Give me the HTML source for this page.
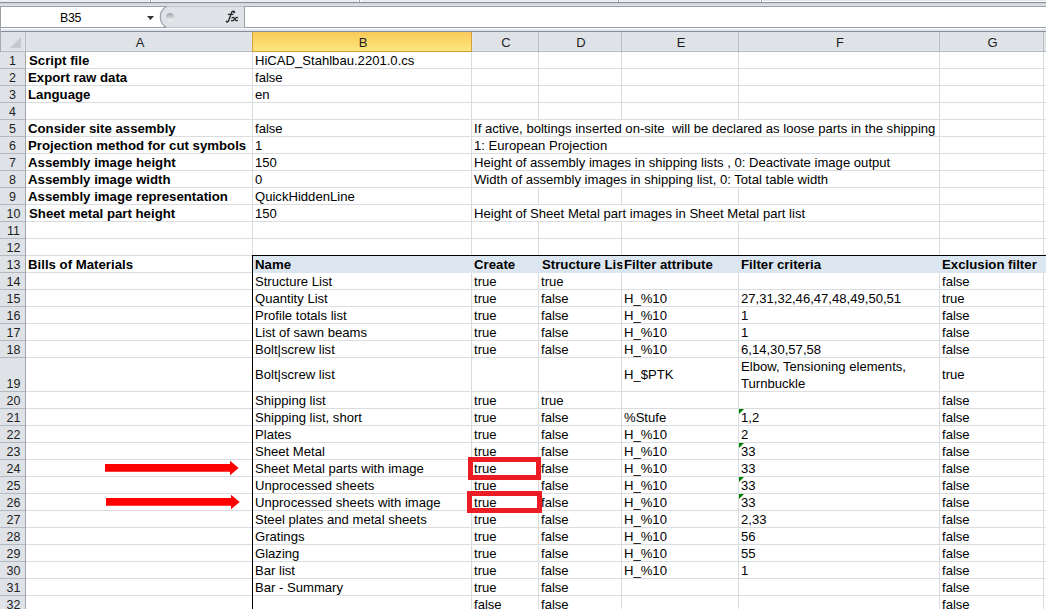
<!DOCTYPE html>
<html><head><meta charset="utf-8"><style>
html,body{margin:0;padding:0;}
body{width:1046px;height:609px;position:relative;overflow:hidden;background:#fff;}
body div, body span, body svg{position:absolute;}
span{white-space:pre;font-family:"Liberation Sans",sans-serif;color:#000;}
.t{font-size:13px;line-height:17px;transform:scaleX(1.007);transform-origin:0 0;}
.b{font-size:13px;line-height:17px;font-weight:bold;transform:scaleX(1.017);transform-origin:0 0;}
.h{font-size:12.5px;line-height:17px;color:#1e1e1e;}
</style></head><body>
<div style="left:0px;top:0px;width:1046px;height:2px;background:#eaedf1;"></div>
<div style="left:149px;top:0px;width:1px;height:2px;background:#ffffff;"></div>
<div style="left:150px;top:0px;width:1px;height:2px;background:#a3a8b0;"></div>
<div style="left:151px;top:0px;width:1px;height:2px;background:#ffffff;"></div>
<div style="left:358px;top:0px;width:1px;height:2px;background:#ffffff;"></div>
<div style="left:359px;top:0px;width:1px;height:2px;background:#a3a8b0;"></div>
<div style="left:360px;top:0px;width:1px;height:2px;background:#ffffff;"></div>
<div style="left:617px;top:0px;width:1px;height:2px;background:#ffffff;"></div>
<div style="left:618px;top:0px;width:1px;height:2px;background:#a3a8b0;"></div>
<div style="left:619px;top:0px;width:1px;height:2px;background:#ffffff;"></div>
<div style="left:760px;top:0px;width:1px;height:2px;background:#ffffff;"></div>
<div style="left:761px;top:0px;width:1px;height:2px;background:#a3a8b0;"></div>
<div style="left:762px;top:0px;width:1px;height:2px;background:#ffffff;"></div>
<div style="left:762px;top:0px;width:284px;height:2px;background:#ffffff;"></div>
<div style="left:763px;top:0px;width:283px;height:1px;background:#e0e4ee;"></div>
<div style="left:0px;top:2px;width:1046px;height:1px;background:#8b9099;"></div>
<div style="left:0;top:3px;width:1046px;height:3px;background:linear-gradient(#ced2d7,#e2e5e9)"></div>
<div style="left:0px;top:6px;width:1046px;height:1px;background:#9aa0a8;"></div>
<div style="left:0px;top:7px;width:1046px;height:20px;background:#ffffff;"></div>
<div style="left:0px;top:6px;width:1px;height:22px;background:#9aa0a8;"></div>
<div style="left:0px;top:27px;width:1046px;height:1px;background:#9aa0a8;"></div>
<div style="left:0px;top:28px;width:1046px;height:1px;background:#ffffff;"></div>
<div style="left:2px;top:29px;width:1044px;height:2px;background:#e1e5f0;"></div>
<div style="left:0px;top:28px;width:1px;height:3px;background:#9aa6bc;"></div>
<div style="left:0px;top:31px;width:1046px;height:1px;background:#8a8d93;"></div>
<span class="h" style="left:60px;top:11px;font-size:12.4px;line-height:15px;color:#000;letter-spacing:-0.3px">B35</span>
<svg style="left:146px;top:15px" width="9" height="6"><path d="M1 1 H8 L4.5 5 Z" fill="#333"/></svg>
<svg style="left:0;top:0" width="260" height="32"><defs><linearGradient id="g1" x1="0" y1="0" x2="0" y2="1"><stop offset="0" stop-color="#9ca0a5"/><stop offset="0.55" stop-color="#cacdd1"/><stop offset="1" stop-color="#f4f5f6"/></linearGradient></defs><path d="M244.5 6.5 H166.5 A12 12 0 0 0 166.5 27.5 H244.5 Z" fill="#dfe3e8"/><path d="M166.5 6.5 A12 12 0 0 0 166.5 27.5" fill="none" stroke="#9aa0a8" stroke-width="1.2"/><rect x="244" y="6" width="1" height="22" fill="#9aa0a8"/><circle cx="170" cy="16.8" r="3.9" fill="url(#g1)"/><g stroke="#2e2e2e" fill="none" stroke-linecap="round"><path d="M234.5 11.9 C233.8 10.9 232.2 11.0 231.6 12.6 L228.7 20.6 C228.2 21.9 227.3 22.3 226.4 21.7" stroke-width="1.45"/><path d="M228.4 14.4 H232.8" stroke-width="1.4"/><path d="M232.0 17.9 C233.1 17.0 233.9 17.5 234.5 18.5 L235.3 19.8 C235.8 20.6 236.6 20.9 237.4 20.4" stroke-width="1.3"/><path d="M237.6 17.5 C236.8 17.1 236.1 17.6 235.3 18.5 L233.5 20.3 C232.9 20.9 232.1 21.0 231.5 20.6" stroke-width="1.3"/></g><circle cx="234.1" cy="12.3" r="1.05" fill="#2e2e2e"/><circle cx="226.8" cy="21.3" r="0.9" fill="#2e2e2e"/></svg>
<div style="left:0px;top:32px;width:1046px;height:19px;background:#dfe3e8;"></div>
<div style="left:0px;top:50px;width:1046px;height:1px;background:#e3e6ea;"></div>
<div style="left:0px;top:51px;width:1046px;height:1px;background:#b4b9bf;"></div>
<div style="left:0px;top:31px;width:1px;height:21px;background:#a5abb3;"></div>
<svg style="left:10px;top:37px" width="12" height="12"><path d="M11 0 V11 H0 Z" fill="#c5c9ce"/></svg>
<div style="left:25px;top:32px;width:1px;height:19px;background:#b4b9bf;"></div>
<div style="left:26px;top:32px;width:1px;height:19px;background:#e4e7eb;"></div>
<div style="left:24px;top:32px;width:1px;height:19px;background:#e3e6ea;"></div>
<div style="left:252px;top:32px;width:1px;height:19px;background:#b4b9bf;"></div>
<div style="left:253px;top:32px;width:1px;height:19px;background:#e4e7eb;"></div>
<div style="left:251px;top:32px;width:1px;height:19px;background:#e3e6ea;"></div>
<div style="left:471px;top:32px;width:1px;height:19px;background:#b4b9bf;"></div>
<div style="left:472px;top:32px;width:1px;height:19px;background:#e4e7eb;"></div>
<div style="left:470px;top:32px;width:1px;height:19px;background:#e3e6ea;"></div>
<div style="left:538px;top:32px;width:1px;height:19px;background:#b4b9bf;"></div>
<div style="left:539px;top:32px;width:1px;height:19px;background:#e4e7eb;"></div>
<div style="left:537px;top:32px;width:1px;height:19px;background:#e3e6ea;"></div>
<div style="left:621px;top:32px;width:1px;height:19px;background:#b4b9bf;"></div>
<div style="left:622px;top:32px;width:1px;height:19px;background:#e4e7eb;"></div>
<div style="left:620px;top:32px;width:1px;height:19px;background:#e3e6ea;"></div>
<div style="left:738px;top:32px;width:1px;height:19px;background:#b4b9bf;"></div>
<div style="left:739px;top:32px;width:1px;height:19px;background:#e4e7eb;"></div>
<div style="left:737px;top:32px;width:1px;height:19px;background:#e3e6ea;"></div>
<div style="left:939px;top:32px;width:1px;height:19px;background:#b4b9bf;"></div>
<div style="left:940px;top:32px;width:1px;height:19px;background:#e4e7eb;"></div>
<div style="left:938px;top:32px;width:1px;height:19px;background:#e3e6ea;"></div>
<div style="left:1043px;top:32px;width:1px;height:19px;background:#b4b9bf;"></div>
<div style="left:1044px;top:32px;width:1px;height:19px;background:#e4e7eb;"></div>
<div style="left:1042px;top:32px;width:1px;height:19px;background:#e3e6ea;"></div>
<div style="left:252px;top:32px;width:220px;height:20px;box-sizing:border-box;border:1px solid #d89f3e;border-top:0;background:linear-gradient(#f8c958,#fee780)"></div>
<span class="h" style="left:27px;width:226px;top:34px;text-align:center;font-size:13px">A</span>
<span class="h" style="left:254px;width:218px;top:34px;text-align:center;font-size:13px">B</span>
<span class="h" style="left:473px;width:66px;top:34px;text-align:center;font-size:13px">C</span>
<span class="h" style="left:540px;width:82px;top:34px;text-align:center;font-size:13px">D</span>
<span class="h" style="left:623px;width:116px;top:34px;text-align:center;font-size:13px">E</span>
<span class="h" style="left:740px;width:200px;top:34px;text-align:center;font-size:13px">F</span>
<span class="h" style="left:941px;width:103px;top:34px;text-align:center;font-size:13px">G</span>
<div style="left:0px;top:52px;width:25px;height:557px;background:#dfe3e8;"></div>
<div style="left:25px;top:52px;width:1px;height:557px;background:#9fa5ad;"></div>
<div style="left:0px;top:68px;width:25px;height:1px;background:#b4b9bf;"></div>
<span class="h" style="left:0px;width:25px;top:53px;text-align:center">1</span>
<div style="left:0px;top:85px;width:25px;height:1px;background:#b4b9bf;"></div>
<span class="h" style="left:0px;width:25px;top:70px;text-align:center">2</span>
<div style="left:0px;top:102px;width:25px;height:1px;background:#b4b9bf;"></div>
<span class="h" style="left:0px;width:25px;top:87px;text-align:center">3</span>
<div style="left:0px;top:119px;width:25px;height:1px;background:#b4b9bf;"></div>
<span class="h" style="left:0px;width:25px;top:104px;text-align:center">4</span>
<div style="left:0px;top:136px;width:25px;height:1px;background:#b4b9bf;"></div>
<span class="h" style="left:0px;width:25px;top:121px;text-align:center">5</span>
<div style="left:0px;top:153px;width:25px;height:1px;background:#b4b9bf;"></div>
<span class="h" style="left:0px;width:25px;top:138px;text-align:center">6</span>
<div style="left:0px;top:170px;width:25px;height:1px;background:#b4b9bf;"></div>
<span class="h" style="left:0px;width:25px;top:155px;text-align:center">7</span>
<div style="left:0px;top:187px;width:25px;height:1px;background:#b4b9bf;"></div>
<span class="h" style="left:0px;width:25px;top:172px;text-align:center">8</span>
<div style="left:0px;top:204px;width:25px;height:1px;background:#b4b9bf;"></div>
<span class="h" style="left:0px;width:25px;top:189px;text-align:center">9</span>
<div style="left:0px;top:221px;width:25px;height:1px;background:#b4b9bf;"></div>
<span class="h" style="left:1px;width:25px;top:206px;text-align:center">10</span>
<div style="left:0px;top:238px;width:25px;height:1px;background:#b4b9bf;"></div>
<span class="h" style="left:1px;width:25px;top:223px;text-align:center">11</span>
<div style="left:0px;top:255px;width:25px;height:1px;background:#b4b9bf;"></div>
<span class="h" style="left:1px;width:25px;top:240px;text-align:center">12</span>
<div style="left:0px;top:272px;width:25px;height:1px;background:#b4b9bf;"></div>
<span class="h" style="left:1px;width:25px;top:257px;text-align:center">13</span>
<div style="left:0px;top:289px;width:25px;height:1px;background:#b4b9bf;"></div>
<span class="h" style="left:1px;width:25px;top:274px;text-align:center">14</span>
<div style="left:0px;top:306px;width:25px;height:1px;background:#b4b9bf;"></div>
<span class="h" style="left:1px;width:25px;top:291px;text-align:center">15</span>
<div style="left:0px;top:323px;width:25px;height:1px;background:#b4b9bf;"></div>
<span class="h" style="left:1px;width:25px;top:308px;text-align:center">16</span>
<div style="left:0px;top:340px;width:25px;height:1px;background:#b4b9bf;"></div>
<span class="h" style="left:1px;width:25px;top:325px;text-align:center">17</span>
<div style="left:0px;top:357px;width:25px;height:1px;background:#b4b9bf;"></div>
<span class="h" style="left:1px;width:25px;top:342px;text-align:center">18</span>
<div style="left:0px;top:391px;width:25px;height:1px;background:#b4b9bf;"></div>
<span class="h" style="left:1px;width:25px;top:376px;text-align:center">19</span>
<div style="left:0px;top:408px;width:25px;height:1px;background:#b4b9bf;"></div>
<span class="h" style="left:1px;width:25px;top:393px;text-align:center">20</span>
<div style="left:0px;top:425px;width:25px;height:1px;background:#b4b9bf;"></div>
<span class="h" style="left:1px;width:25px;top:410px;text-align:center">21</span>
<div style="left:0px;top:442px;width:25px;height:1px;background:#b4b9bf;"></div>
<span class="h" style="left:1px;width:25px;top:427px;text-align:center">22</span>
<div style="left:0px;top:459px;width:25px;height:1px;background:#b4b9bf;"></div>
<span class="h" style="left:1px;width:25px;top:444px;text-align:center">23</span>
<div style="left:0px;top:476px;width:25px;height:1px;background:#b4b9bf;"></div>
<span class="h" style="left:1px;width:25px;top:461px;text-align:center">24</span>
<div style="left:0px;top:493px;width:25px;height:1px;background:#b4b9bf;"></div>
<span class="h" style="left:1px;width:25px;top:478px;text-align:center">25</span>
<div style="left:0px;top:510px;width:25px;height:1px;background:#b4b9bf;"></div>
<span class="h" style="left:1px;width:25px;top:495px;text-align:center">26</span>
<div style="left:0px;top:527px;width:25px;height:1px;background:#b4b9bf;"></div>
<span class="h" style="left:1px;width:25px;top:512px;text-align:center">27</span>
<div style="left:0px;top:544px;width:25px;height:1px;background:#b4b9bf;"></div>
<span class="h" style="left:1px;width:25px;top:529px;text-align:center">28</span>
<div style="left:0px;top:561px;width:25px;height:1px;background:#b4b9bf;"></div>
<span class="h" style="left:1px;width:25px;top:546px;text-align:center">29</span>
<div style="left:0px;top:578px;width:25px;height:1px;background:#b4b9bf;"></div>
<span class="h" style="left:1px;width:25px;top:563px;text-align:center">30</span>
<div style="left:0px;top:595px;width:25px;height:1px;background:#b4b9bf;"></div>
<span class="h" style="left:1px;width:25px;top:580px;text-align:center">31</span>
<span class="h" style="left:1px;width:25px;top:597px;text-align:center">32</span>
<div style="left:26px;top:68px;width:1020px;height:1px;background:#dadcdd;"></div>
<div style="left:26px;top:85px;width:1020px;height:1px;background:#dadcdd;"></div>
<div style="left:26px;top:102px;width:1020px;height:1px;background:#dadcdd;"></div>
<div style="left:26px;top:119px;width:1020px;height:1px;background:#dadcdd;"></div>
<div style="left:26px;top:136px;width:1020px;height:1px;background:#dadcdd;"></div>
<div style="left:26px;top:153px;width:1020px;height:1px;background:#dadcdd;"></div>
<div style="left:26px;top:170px;width:1020px;height:1px;background:#dadcdd;"></div>
<div style="left:26px;top:187px;width:1020px;height:1px;background:#dadcdd;"></div>
<div style="left:26px;top:204px;width:1020px;height:1px;background:#dadcdd;"></div>
<div style="left:26px;top:221px;width:1020px;height:1px;background:#dadcdd;"></div>
<div style="left:26px;top:238px;width:1020px;height:1px;background:#dadcdd;"></div>
<div style="left:26px;top:255px;width:1020px;height:1px;background:#dadcdd;"></div>
<div style="left:26px;top:272px;width:1020px;height:1px;background:#dadcdd;"></div>
<div style="left:26px;top:289px;width:1020px;height:1px;background:#dadcdd;"></div>
<div style="left:26px;top:306px;width:1020px;height:1px;background:#dadcdd;"></div>
<div style="left:26px;top:323px;width:1020px;height:1px;background:#dadcdd;"></div>
<div style="left:26px;top:340px;width:1020px;height:1px;background:#dadcdd;"></div>
<div style="left:26px;top:357px;width:1020px;height:1px;background:#dadcdd;"></div>
<div style="left:26px;top:391px;width:1020px;height:1px;background:#dadcdd;"></div>
<div style="left:26px;top:408px;width:1020px;height:1px;background:#dadcdd;"></div>
<div style="left:26px;top:425px;width:1020px;height:1px;background:#dadcdd;"></div>
<div style="left:26px;top:442px;width:1020px;height:1px;background:#dadcdd;"></div>
<div style="left:26px;top:459px;width:1020px;height:1px;background:#dadcdd;"></div>
<div style="left:26px;top:476px;width:1020px;height:1px;background:#dadcdd;"></div>
<div style="left:26px;top:493px;width:1020px;height:1px;background:#dadcdd;"></div>
<div style="left:26px;top:510px;width:1020px;height:1px;background:#dadcdd;"></div>
<div style="left:26px;top:527px;width:1020px;height:1px;background:#dadcdd;"></div>
<div style="left:26px;top:544px;width:1020px;height:1px;background:#dadcdd;"></div>
<div style="left:26px;top:561px;width:1020px;height:1px;background:#dadcdd;"></div>
<div style="left:26px;top:578px;width:1020px;height:1px;background:#dadcdd;"></div>
<div style="left:26px;top:595px;width:1020px;height:1px;background:#dadcdd;"></div>
<div style="left:252px;top:52px;width:1px;height:16px;background:#dadcdd;"></div>
<div style="left:252px;top:69px;width:1px;height:16px;background:#dadcdd;"></div>
<div style="left:252px;top:86px;width:1px;height:16px;background:#dadcdd;"></div>
<div style="left:252px;top:103px;width:1px;height:16px;background:#dadcdd;"></div>
<div style="left:252px;top:120px;width:1px;height:16px;background:#dadcdd;"></div>
<div style="left:252px;top:137px;width:1px;height:16px;background:#dadcdd;"></div>
<div style="left:252px;top:154px;width:1px;height:16px;background:#dadcdd;"></div>
<div style="left:252px;top:171px;width:1px;height:16px;background:#dadcdd;"></div>
<div style="left:252px;top:188px;width:1px;height:16px;background:#dadcdd;"></div>
<div style="left:252px;top:205px;width:1px;height:16px;background:#dadcdd;"></div>
<div style="left:252px;top:222px;width:1px;height:16px;background:#dadcdd;"></div>
<div style="left:252px;top:239px;width:1px;height:16px;background:#dadcdd;"></div>
<div style="left:252px;top:256px;width:1px;height:16px;background:#dadcdd;"></div>
<div style="left:252px;top:273px;width:1px;height:16px;background:#dadcdd;"></div>
<div style="left:252px;top:290px;width:1px;height:16px;background:#dadcdd;"></div>
<div style="left:252px;top:307px;width:1px;height:16px;background:#dadcdd;"></div>
<div style="left:252px;top:324px;width:1px;height:16px;background:#dadcdd;"></div>
<div style="left:252px;top:341px;width:1px;height:16px;background:#dadcdd;"></div>
<div style="left:252px;top:358px;width:1px;height:33px;background:#dadcdd;"></div>
<div style="left:252px;top:392px;width:1px;height:16px;background:#dadcdd;"></div>
<div style="left:252px;top:409px;width:1px;height:16px;background:#dadcdd;"></div>
<div style="left:252px;top:426px;width:1px;height:16px;background:#dadcdd;"></div>
<div style="left:252px;top:443px;width:1px;height:16px;background:#dadcdd;"></div>
<div style="left:252px;top:460px;width:1px;height:16px;background:#dadcdd;"></div>
<div style="left:252px;top:477px;width:1px;height:16px;background:#dadcdd;"></div>
<div style="left:252px;top:494px;width:1px;height:16px;background:#dadcdd;"></div>
<div style="left:252px;top:511px;width:1px;height:16px;background:#dadcdd;"></div>
<div style="left:252px;top:528px;width:1px;height:16px;background:#dadcdd;"></div>
<div style="left:252px;top:545px;width:1px;height:16px;background:#dadcdd;"></div>
<div style="left:252px;top:562px;width:1px;height:16px;background:#dadcdd;"></div>
<div style="left:252px;top:579px;width:1px;height:16px;background:#dadcdd;"></div>
<div style="left:252px;top:596px;width:1px;height:16px;background:#dadcdd;"></div>
<div style="left:471px;top:52px;width:1px;height:16px;background:#dadcdd;"></div>
<div style="left:471px;top:69px;width:1px;height:16px;background:#dadcdd;"></div>
<div style="left:471px;top:86px;width:1px;height:16px;background:#dadcdd;"></div>
<div style="left:471px;top:103px;width:1px;height:16px;background:#dadcdd;"></div>
<div style="left:471px;top:120px;width:1px;height:16px;background:#dadcdd;"></div>
<div style="left:471px;top:137px;width:1px;height:16px;background:#dadcdd;"></div>
<div style="left:471px;top:154px;width:1px;height:16px;background:#dadcdd;"></div>
<div style="left:471px;top:171px;width:1px;height:16px;background:#dadcdd;"></div>
<div style="left:471px;top:188px;width:1px;height:16px;background:#dadcdd;"></div>
<div style="left:471px;top:205px;width:1px;height:16px;background:#dadcdd;"></div>
<div style="left:471px;top:222px;width:1px;height:16px;background:#dadcdd;"></div>
<div style="left:471px;top:239px;width:1px;height:16px;background:#dadcdd;"></div>
<div style="left:471px;top:256px;width:1px;height:16px;background:#dadcdd;"></div>
<div style="left:471px;top:273px;width:1px;height:16px;background:#dadcdd;"></div>
<div style="left:471px;top:290px;width:1px;height:16px;background:#dadcdd;"></div>
<div style="left:471px;top:307px;width:1px;height:16px;background:#dadcdd;"></div>
<div style="left:471px;top:324px;width:1px;height:16px;background:#dadcdd;"></div>
<div style="left:471px;top:341px;width:1px;height:16px;background:#dadcdd;"></div>
<div style="left:471px;top:358px;width:1px;height:33px;background:#dadcdd;"></div>
<div style="left:471px;top:392px;width:1px;height:16px;background:#dadcdd;"></div>
<div style="left:471px;top:409px;width:1px;height:16px;background:#dadcdd;"></div>
<div style="left:471px;top:426px;width:1px;height:16px;background:#dadcdd;"></div>
<div style="left:471px;top:443px;width:1px;height:16px;background:#dadcdd;"></div>
<div style="left:471px;top:460px;width:1px;height:16px;background:#dadcdd;"></div>
<div style="left:471px;top:477px;width:1px;height:16px;background:#dadcdd;"></div>
<div style="left:471px;top:494px;width:1px;height:16px;background:#dadcdd;"></div>
<div style="left:471px;top:511px;width:1px;height:16px;background:#dadcdd;"></div>
<div style="left:471px;top:528px;width:1px;height:16px;background:#dadcdd;"></div>
<div style="left:471px;top:545px;width:1px;height:16px;background:#dadcdd;"></div>
<div style="left:471px;top:562px;width:1px;height:16px;background:#dadcdd;"></div>
<div style="left:471px;top:579px;width:1px;height:16px;background:#dadcdd;"></div>
<div style="left:471px;top:596px;width:1px;height:16px;background:#dadcdd;"></div>
<div style="left:538px;top:52px;width:1px;height:16px;background:#dadcdd;"></div>
<div style="left:538px;top:69px;width:1px;height:16px;background:#dadcdd;"></div>
<div style="left:538px;top:86px;width:1px;height:16px;background:#dadcdd;"></div>
<div style="left:538px;top:103px;width:1px;height:16px;background:#dadcdd;"></div>
<div style="left:538px;top:188px;width:1px;height:16px;background:#dadcdd;"></div>
<div style="left:538px;top:222px;width:1px;height:16px;background:#dadcdd;"></div>
<div style="left:538px;top:239px;width:1px;height:16px;background:#dadcdd;"></div>
<div style="left:538px;top:256px;width:1px;height:16px;background:#dadcdd;"></div>
<div style="left:538px;top:273px;width:1px;height:16px;background:#dadcdd;"></div>
<div style="left:538px;top:290px;width:1px;height:16px;background:#dadcdd;"></div>
<div style="left:538px;top:307px;width:1px;height:16px;background:#dadcdd;"></div>
<div style="left:538px;top:324px;width:1px;height:16px;background:#dadcdd;"></div>
<div style="left:538px;top:341px;width:1px;height:16px;background:#dadcdd;"></div>
<div style="left:538px;top:358px;width:1px;height:33px;background:#dadcdd;"></div>
<div style="left:538px;top:392px;width:1px;height:16px;background:#dadcdd;"></div>
<div style="left:538px;top:409px;width:1px;height:16px;background:#dadcdd;"></div>
<div style="left:538px;top:426px;width:1px;height:16px;background:#dadcdd;"></div>
<div style="left:538px;top:443px;width:1px;height:16px;background:#dadcdd;"></div>
<div style="left:538px;top:460px;width:1px;height:16px;background:#dadcdd;"></div>
<div style="left:538px;top:477px;width:1px;height:16px;background:#dadcdd;"></div>
<div style="left:538px;top:494px;width:1px;height:16px;background:#dadcdd;"></div>
<div style="left:538px;top:511px;width:1px;height:16px;background:#dadcdd;"></div>
<div style="left:538px;top:528px;width:1px;height:16px;background:#dadcdd;"></div>
<div style="left:538px;top:545px;width:1px;height:16px;background:#dadcdd;"></div>
<div style="left:538px;top:562px;width:1px;height:16px;background:#dadcdd;"></div>
<div style="left:538px;top:579px;width:1px;height:16px;background:#dadcdd;"></div>
<div style="left:538px;top:596px;width:1px;height:16px;background:#dadcdd;"></div>
<div style="left:621px;top:52px;width:1px;height:16px;background:#dadcdd;"></div>
<div style="left:621px;top:69px;width:1px;height:16px;background:#dadcdd;"></div>
<div style="left:621px;top:86px;width:1px;height:16px;background:#dadcdd;"></div>
<div style="left:621px;top:103px;width:1px;height:16px;background:#dadcdd;"></div>
<div style="left:621px;top:188px;width:1px;height:16px;background:#dadcdd;"></div>
<div style="left:621px;top:222px;width:1px;height:16px;background:#dadcdd;"></div>
<div style="left:621px;top:239px;width:1px;height:16px;background:#dadcdd;"></div>
<div style="left:621px;top:256px;width:1px;height:16px;background:#dadcdd;"></div>
<div style="left:621px;top:273px;width:1px;height:16px;background:#dadcdd;"></div>
<div style="left:621px;top:290px;width:1px;height:16px;background:#dadcdd;"></div>
<div style="left:621px;top:307px;width:1px;height:16px;background:#dadcdd;"></div>
<div style="left:621px;top:324px;width:1px;height:16px;background:#dadcdd;"></div>
<div style="left:621px;top:341px;width:1px;height:16px;background:#dadcdd;"></div>
<div style="left:621px;top:358px;width:1px;height:33px;background:#dadcdd;"></div>
<div style="left:621px;top:392px;width:1px;height:16px;background:#dadcdd;"></div>
<div style="left:621px;top:409px;width:1px;height:16px;background:#dadcdd;"></div>
<div style="left:621px;top:426px;width:1px;height:16px;background:#dadcdd;"></div>
<div style="left:621px;top:443px;width:1px;height:16px;background:#dadcdd;"></div>
<div style="left:621px;top:460px;width:1px;height:16px;background:#dadcdd;"></div>
<div style="left:621px;top:477px;width:1px;height:16px;background:#dadcdd;"></div>
<div style="left:621px;top:494px;width:1px;height:16px;background:#dadcdd;"></div>
<div style="left:621px;top:511px;width:1px;height:16px;background:#dadcdd;"></div>
<div style="left:621px;top:528px;width:1px;height:16px;background:#dadcdd;"></div>
<div style="left:621px;top:545px;width:1px;height:16px;background:#dadcdd;"></div>
<div style="left:621px;top:562px;width:1px;height:16px;background:#dadcdd;"></div>
<div style="left:621px;top:579px;width:1px;height:16px;background:#dadcdd;"></div>
<div style="left:621px;top:596px;width:1px;height:16px;background:#dadcdd;"></div>
<div style="left:738px;top:52px;width:1px;height:16px;background:#dadcdd;"></div>
<div style="left:738px;top:69px;width:1px;height:16px;background:#dadcdd;"></div>
<div style="left:738px;top:86px;width:1px;height:16px;background:#dadcdd;"></div>
<div style="left:738px;top:103px;width:1px;height:16px;background:#dadcdd;"></div>
<div style="left:738px;top:188px;width:1px;height:16px;background:#dadcdd;"></div>
<div style="left:738px;top:222px;width:1px;height:16px;background:#dadcdd;"></div>
<div style="left:738px;top:239px;width:1px;height:16px;background:#dadcdd;"></div>
<div style="left:738px;top:256px;width:1px;height:16px;background:#dadcdd;"></div>
<div style="left:738px;top:273px;width:1px;height:16px;background:#dadcdd;"></div>
<div style="left:738px;top:290px;width:1px;height:16px;background:#dadcdd;"></div>
<div style="left:738px;top:307px;width:1px;height:16px;background:#dadcdd;"></div>
<div style="left:738px;top:324px;width:1px;height:16px;background:#dadcdd;"></div>
<div style="left:738px;top:341px;width:1px;height:16px;background:#dadcdd;"></div>
<div style="left:738px;top:358px;width:1px;height:33px;background:#dadcdd;"></div>
<div style="left:738px;top:392px;width:1px;height:16px;background:#dadcdd;"></div>
<div style="left:738px;top:409px;width:1px;height:16px;background:#dadcdd;"></div>
<div style="left:738px;top:426px;width:1px;height:16px;background:#dadcdd;"></div>
<div style="left:738px;top:443px;width:1px;height:16px;background:#dadcdd;"></div>
<div style="left:738px;top:460px;width:1px;height:16px;background:#dadcdd;"></div>
<div style="left:738px;top:477px;width:1px;height:16px;background:#dadcdd;"></div>
<div style="left:738px;top:494px;width:1px;height:16px;background:#dadcdd;"></div>
<div style="left:738px;top:511px;width:1px;height:16px;background:#dadcdd;"></div>
<div style="left:738px;top:528px;width:1px;height:16px;background:#dadcdd;"></div>
<div style="left:738px;top:545px;width:1px;height:16px;background:#dadcdd;"></div>
<div style="left:738px;top:562px;width:1px;height:16px;background:#dadcdd;"></div>
<div style="left:738px;top:579px;width:1px;height:16px;background:#dadcdd;"></div>
<div style="left:738px;top:596px;width:1px;height:16px;background:#dadcdd;"></div>
<div style="left:939px;top:52px;width:1px;height:16px;background:#dadcdd;"></div>
<div style="left:939px;top:69px;width:1px;height:16px;background:#dadcdd;"></div>
<div style="left:939px;top:86px;width:1px;height:16px;background:#dadcdd;"></div>
<div style="left:939px;top:103px;width:1px;height:16px;background:#dadcdd;"></div>
<div style="left:939px;top:120px;width:1px;height:16px;background:#dadcdd;"></div>
<div style="left:939px;top:137px;width:1px;height:16px;background:#dadcdd;"></div>
<div style="left:939px;top:154px;width:1px;height:16px;background:#dadcdd;"></div>
<div style="left:939px;top:171px;width:1px;height:16px;background:#dadcdd;"></div>
<div style="left:939px;top:188px;width:1px;height:16px;background:#dadcdd;"></div>
<div style="left:939px;top:205px;width:1px;height:16px;background:#dadcdd;"></div>
<div style="left:939px;top:222px;width:1px;height:16px;background:#dadcdd;"></div>
<div style="left:939px;top:239px;width:1px;height:16px;background:#dadcdd;"></div>
<div style="left:939px;top:256px;width:1px;height:16px;background:#dadcdd;"></div>
<div style="left:939px;top:273px;width:1px;height:16px;background:#dadcdd;"></div>
<div style="left:939px;top:290px;width:1px;height:16px;background:#dadcdd;"></div>
<div style="left:939px;top:307px;width:1px;height:16px;background:#dadcdd;"></div>
<div style="left:939px;top:324px;width:1px;height:16px;background:#dadcdd;"></div>
<div style="left:939px;top:341px;width:1px;height:16px;background:#dadcdd;"></div>
<div style="left:939px;top:358px;width:1px;height:33px;background:#dadcdd;"></div>
<div style="left:939px;top:392px;width:1px;height:16px;background:#dadcdd;"></div>
<div style="left:939px;top:409px;width:1px;height:16px;background:#dadcdd;"></div>
<div style="left:939px;top:426px;width:1px;height:16px;background:#dadcdd;"></div>
<div style="left:939px;top:443px;width:1px;height:16px;background:#dadcdd;"></div>
<div style="left:939px;top:460px;width:1px;height:16px;background:#dadcdd;"></div>
<div style="left:939px;top:477px;width:1px;height:16px;background:#dadcdd;"></div>
<div style="left:939px;top:494px;width:1px;height:16px;background:#dadcdd;"></div>
<div style="left:939px;top:511px;width:1px;height:16px;background:#dadcdd;"></div>
<div style="left:939px;top:528px;width:1px;height:16px;background:#dadcdd;"></div>
<div style="left:939px;top:545px;width:1px;height:16px;background:#dadcdd;"></div>
<div style="left:939px;top:562px;width:1px;height:16px;background:#dadcdd;"></div>
<div style="left:939px;top:579px;width:1px;height:16px;background:#dadcdd;"></div>
<div style="left:939px;top:596px;width:1px;height:16px;background:#dadcdd;"></div>
<div style="left:1043px;top:52px;width:1px;height:16px;background:#dadcdd;"></div>
<div style="left:1043px;top:69px;width:1px;height:16px;background:#dadcdd;"></div>
<div style="left:1043px;top:86px;width:1px;height:16px;background:#dadcdd;"></div>
<div style="left:1043px;top:103px;width:1px;height:16px;background:#dadcdd;"></div>
<div style="left:1043px;top:120px;width:1px;height:16px;background:#dadcdd;"></div>
<div style="left:1043px;top:137px;width:1px;height:16px;background:#dadcdd;"></div>
<div style="left:1043px;top:154px;width:1px;height:16px;background:#dadcdd;"></div>
<div style="left:1043px;top:171px;width:1px;height:16px;background:#dadcdd;"></div>
<div style="left:1043px;top:188px;width:1px;height:16px;background:#dadcdd;"></div>
<div style="left:1043px;top:205px;width:1px;height:16px;background:#dadcdd;"></div>
<div style="left:1043px;top:222px;width:1px;height:16px;background:#dadcdd;"></div>
<div style="left:1043px;top:239px;width:1px;height:16px;background:#dadcdd;"></div>
<div style="left:1043px;top:256px;width:1px;height:16px;background:#dadcdd;"></div>
<div style="left:1043px;top:273px;width:1px;height:16px;background:#dadcdd;"></div>
<div style="left:1043px;top:290px;width:1px;height:16px;background:#dadcdd;"></div>
<div style="left:1043px;top:307px;width:1px;height:16px;background:#dadcdd;"></div>
<div style="left:1043px;top:324px;width:1px;height:16px;background:#dadcdd;"></div>
<div style="left:1043px;top:341px;width:1px;height:16px;background:#dadcdd;"></div>
<div style="left:1043px;top:358px;width:1px;height:33px;background:#dadcdd;"></div>
<div style="left:1043px;top:392px;width:1px;height:16px;background:#dadcdd;"></div>
<div style="left:1043px;top:409px;width:1px;height:16px;background:#dadcdd;"></div>
<div style="left:1043px;top:426px;width:1px;height:16px;background:#dadcdd;"></div>
<div style="left:1043px;top:443px;width:1px;height:16px;background:#dadcdd;"></div>
<div style="left:1043px;top:460px;width:1px;height:16px;background:#dadcdd;"></div>
<div style="left:1043px;top:477px;width:1px;height:16px;background:#dadcdd;"></div>
<div style="left:1043px;top:494px;width:1px;height:16px;background:#dadcdd;"></div>
<div style="left:1043px;top:511px;width:1px;height:16px;background:#dadcdd;"></div>
<div style="left:1043px;top:528px;width:1px;height:16px;background:#dadcdd;"></div>
<div style="left:1043px;top:545px;width:1px;height:16px;background:#dadcdd;"></div>
<div style="left:1043px;top:562px;width:1px;height:16px;background:#dadcdd;"></div>
<div style="left:1043px;top:579px;width:1px;height:16px;background:#dadcdd;"></div>
<div style="left:1043px;top:596px;width:1px;height:16px;background:#dadcdd;"></div>
<div style="left:253px;top:256px;width:793px;height:17px;background:#dce6f1;"></div>
<div style="left:252px;top:255px;width:794px;height:1px;background:#000;"></div>
<div style="left:252px;top:255px;width:1px;height:354px;background:#000;"></div>
<span class="b" style="left:29px;top:52px;">Script file</span>
<span class="b" style="left:28px;top:69px;">Export raw data</span>
<span class="b" style="left:28px;top:86px;">Language</span>
<span class="b" style="left:28px;top:120px;">Consider site assembly</span>
<span class="b" style="left:28px;top:137px;">Projection method for cut symbols</span>
<span class="b" style="left:28px;top:154px;">Assembly image height</span>
<span class="b" style="left:28px;top:171px;">Assembly image width</span>
<span class="b" style="left:28px;top:188px;">Assembly image representation</span>
<span class="b" style="left:29px;top:205px;">Sheet metal part height</span>
<span class="b" style="left:28px;top:256px;">Bills of Materials</span>
<span class="t" style="left:255px;top:52px;">HiCAD_Stahlbau.2201.0.cs</span>
<span class="t" style="left:255px;top:69px;">false</span>
<span class="t" style="left:255px;top:86px;">en</span>
<span class="t" style="left:255px;top:120px;">false</span>
<span class="t" style="left:255px;top:137px;">1</span>
<span class="t" style="left:255px;top:154px;">150</span>
<span class="t" style="left:255px;top:171px;">0</span>
<span class="t" style="left:255px;top:188px;">QuickHiddenLine</span>
<span class="t" style="left:255px;top:205px;">150</span>
<span class="t" style="left:474px;top:120px;">If active, boltings inserted on-site&nbsp; will be declared as loose parts in the shipping</span>
<span class="t" style="left:474px;top:137px;">1: European Projection</span>
<span class="t" style="left:474px;top:154px;">Height of assembly images in shipping lists , 0: Deactivate image output</span>
<span class="t" style="left:474px;top:171px;">Width of assembly images in shipping list, 0: Total table width</span>
<span class="t" style="left:474px;top:205px;">Height of Sheet Metal part images in Sheet Metal part list</span>
<span class="b" style="left:255px;top:256px;">Name</span>
<span class="b" style="left:474px;top:256px;">Create</span>
<span class="b" style="left:542px;top:256px;width:79px;overflow:hidden">Structure List</span>
<span class="b" style="left:624px;top:256px;">Filter attribute</span>
<span class="b" style="left:741px;top:256px;">Filter criteria</span>
<span class="b" style="left:942px;top:256px;">Exclusion filter</span>
<span class="t" style="left:255px;top:273px;">Structure List</span>
<span class="t" style="left:474px;top:273px;">true</span>
<span class="t" style="left:541px;top:273px;">true</span>
<span class="t" style="left:942px;top:273px;">false</span>
<span class="t" style="left:255px;top:290px;">Quantity List</span>
<span class="t" style="left:474px;top:290px;">true</span>
<span class="t" style="left:541px;top:290px;">false</span>
<span class="t" style="left:624px;top:290px;">H_%10</span>
<span class="t" style="left:741px;top:290px;">27,31,32,46,47,48,49,50,51</span>
<span class="t" style="left:942px;top:290px;">true</span>
<span class="t" style="left:255px;top:307px;">Profile totals list</span>
<span class="t" style="left:474px;top:307px;">true</span>
<span class="t" style="left:541px;top:307px;">false</span>
<span class="t" style="left:624px;top:307px;">H_%10</span>
<span class="t" style="left:741px;top:307px;">1</span>
<span class="t" style="left:942px;top:307px;">false</span>
<span class="t" style="left:255px;top:324px;">List of sawn beams</span>
<span class="t" style="left:474px;top:324px;">true</span>
<span class="t" style="left:541px;top:324px;">false</span>
<span class="t" style="left:624px;top:324px;">H_%10</span>
<span class="t" style="left:741px;top:324px;">1</span>
<span class="t" style="left:942px;top:324px;">false</span>
<span class="t" style="left:255px;top:341px;">Bolt|screw list</span>
<span class="t" style="left:474px;top:341px;">true</span>
<span class="t" style="left:541px;top:341px;">false</span>
<span class="t" style="left:624px;top:341px;">H_%10</span>
<span class="t" style="left:741px;top:341px;">6,14,30,57,58</span>
<span class="t" style="left:942px;top:341px;">false</span>
<span class="t" style="left:255px;top:366px;">Bolt|screw list</span>
<span class="t" style="left:624px;top:366px;">H_$PTK</span>
<span class="t" style="left:942px;top:366px;">true</span>
<span class="t" style="left:255px;top:392px;">Shipping list</span>
<span class="t" style="left:474px;top:392px;">true</span>
<span class="t" style="left:541px;top:392px;">true</span>
<span class="t" style="left:942px;top:392px;">false</span>
<span class="t" style="left:255px;top:409px;">Shipping list, short</span>
<span class="t" style="left:474px;top:409px;">true</span>
<span class="t" style="left:541px;top:409px;">false</span>
<span class="t" style="left:624px;top:409px;">%Stufe</span>
<span class="t" style="left:741px;top:409px;">1,2</span>
<span class="t" style="left:942px;top:409px;">false</span>
<span class="t" style="left:255px;top:426px;">Plates</span>
<span class="t" style="left:474px;top:426px;">true</span>
<span class="t" style="left:541px;top:426px;">false</span>
<span class="t" style="left:624px;top:426px;">H_%10</span>
<span class="t" style="left:741px;top:426px;">2</span>
<span class="t" style="left:942px;top:426px;">false</span>
<span class="t" style="left:255px;top:443px;">Sheet Metal</span>
<span class="t" style="left:474px;top:443px;">true</span>
<span class="t" style="left:541px;top:443px;">false</span>
<span class="t" style="left:624px;top:443px;">H_%10</span>
<span class="t" style="left:741px;top:443px;">33</span>
<span class="t" style="left:942px;top:443px;">false</span>
<span class="t" style="left:255px;top:460px;">Sheet Metal parts with image</span>
<span class="t" style="left:474px;top:460px;">true</span>
<span class="t" style="left:541px;top:460px;">false</span>
<span class="t" style="left:624px;top:460px;">H_%10</span>
<span class="t" style="left:741px;top:460px;">33</span>
<span class="t" style="left:942px;top:460px;">false</span>
<span class="t" style="left:255px;top:477px;">Unprocessed sheets</span>
<span class="t" style="left:474px;top:477px;">true</span>
<span class="t" style="left:541px;top:477px;">false</span>
<span class="t" style="left:624px;top:477px;">H_%10</span>
<span class="t" style="left:741px;top:477px;">33</span>
<span class="t" style="left:942px;top:477px;">false</span>
<span class="t" style="left:255px;top:494px;">Unprocessed sheets with image</span>
<span class="t" style="left:474px;top:494px;">true</span>
<span class="t" style="left:541px;top:494px;">false</span>
<span class="t" style="left:624px;top:494px;">H_%10</span>
<span class="t" style="left:741px;top:494px;">33</span>
<span class="t" style="left:942px;top:494px;">false</span>
<span class="t" style="left:255px;top:511px;">Steel plates and metal sheets</span>
<span class="t" style="left:474px;top:511px;">true</span>
<span class="t" style="left:541px;top:511px;">false</span>
<span class="t" style="left:624px;top:511px;">H_%10</span>
<span class="t" style="left:741px;top:511px;">2,33</span>
<span class="t" style="left:942px;top:511px;">false</span>
<span class="t" style="left:255px;top:528px;">Gratings</span>
<span class="t" style="left:474px;top:528px;">true</span>
<span class="t" style="left:541px;top:528px;">false</span>
<span class="t" style="left:624px;top:528px;">H_%10</span>
<span class="t" style="left:741px;top:528px;">56</span>
<span class="t" style="left:942px;top:528px;">false</span>
<span class="t" style="left:255px;top:545px;">Glazing</span>
<span class="t" style="left:474px;top:545px;">true</span>
<span class="t" style="left:541px;top:545px;">false</span>
<span class="t" style="left:624px;top:545px;">H_%10</span>
<span class="t" style="left:741px;top:545px;">55</span>
<span class="t" style="left:942px;top:545px;">false</span>
<span class="t" style="left:255px;top:562px;">Bar list</span>
<span class="t" style="left:474px;top:562px;">true</span>
<span class="t" style="left:541px;top:562px;">false</span>
<span class="t" style="left:624px;top:562px;">H_%10</span>
<span class="t" style="left:741px;top:562px;">1</span>
<span class="t" style="left:942px;top:562px;">false</span>
<span class="t" style="left:255px;top:579px;">Bar - Summary</span>
<span class="t" style="left:474px;top:579px;">true</span>
<span class="t" style="left:541px;top:579px;">false</span>
<span class="t" style="left:942px;top:579px;">false</span>
<span class="t" style="left:474px;top:596px;">false</span>
<span class="t" style="left:541px;top:596px;">false</span>
<span class="t" style="left:942px;top:596px;">false</span>
<span class="t" style="left:741px;top:358px;">Elbow, Tensioning elements,</span>
<span class="t" style="left:741px;top:375px;">Turnbuckle</span>
<svg style="left:739px;top:409px" width="6" height="6"><path d="M0 0 H5 L0 5 Z" fill="#008000"/></svg>
<svg style="left:739px;top:443px" width="6" height="6"><path d="M0 0 H5 L0 5 Z" fill="#008000"/></svg>
<svg style="left:739px;top:477px" width="6" height="6"><path d="M0 0 H5 L0 5 Z" fill="#008000"/></svg>
<svg style="left:739px;top:494px" width="6" height="6"><path d="M0 0 H5 L0 5 Z" fill="#008000"/></svg>
<div style="left:468px;top:457px;width:73px;height:23px;box-sizing:border-box;border:5px solid #ec1c24"></div>
<div style="left:467px;top:491px;width:75px;height:22px;box-sizing:border-box;border:5px solid #ec1c24"></div>
<svg style="left:0;top:0" width="1046" height="609"><polygon points="105,464 230,464 230,460.7 238.7,468 230,475.3 230,471.7 105,471.7" fill="#ff0000"/></svg>
<svg style="left:0;top:0" width="1046" height="609"><polygon points="106,498 231,498 231,494.7 239.7,502 231,509.3 231,505.7 106,505.7" fill="#ff0000"/></svg>
</body></html>
